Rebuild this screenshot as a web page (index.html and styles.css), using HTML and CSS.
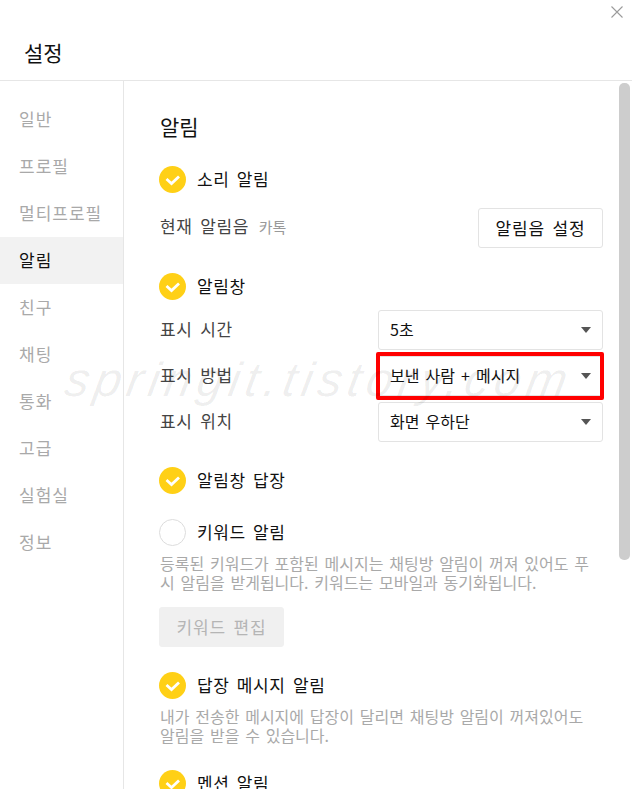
FILE: index.html
```html
<!DOCTYPE html>
<html lang="ko">
<head>
    <meta charset="UTF-8">
    <meta name="viewport" content="width=device-width, initial-scale=1.0">
    <title>설정</title>
    <link rel="stylesheet" href="styles.css">
</head>
<body>
    <div class="settings-window">
        <header class="settings-header">
            <h1 class="settings-title">설정</h1>
            <svg class="close-icon" viewBox="0 0 12 12">
                <path d="M0.5 0.5L11.5 11.5M11.5 0.5L0.5 11.5"/>
            </svg>
        </header>

        <div class="settings-body">
            <nav class="side-menu">
                <a class="side-item">일반</a>
                <a class="side-item">프로필</a>
                <a class="side-item">멀티프로필</a>
                <a class="side-item side-item-active">알림</a>
                <a class="side-item">친구</a>
                <a class="side-item">채팅</a>
                <a class="side-item">통화</a>
                <a class="side-item">고급</a>
                <a class="side-item">실험실</a>
                <a class="side-item">정보</a>
            </nav>

            <main class="settings-content">
                <h2 class="section-title">알림</h2>

                <div class="check-row">
                    <svg class="check-on" viewBox="0 0 27 27"><circle cx="13.5" cy="13.5" r="13.5"/><path d="M7.5 13L12.5 17.5L20 10.5"/></svg>
                    <span>소리 알림</span>
                </div>

                <div class="sound-row">
                    <div class="row-label">현재 알림음 <span class="sound-name">카톡</span></div>
                    <button class="plain-button">알림음 설정</button>
                </div>

                <div class="check-row">
                    <svg class="check-on" viewBox="0 0 27 27"><circle cx="13.5" cy="13.5" r="13.5"/><path d="M7.5 13L12.5 17.5L20 10.5"/></svg>
                    <span>알림창</span>
                </div>

                <div class="select-list">
                    <div class="select-row">
                        <div class="row-label">표시 시간</div>
                        <div class="select-box"><span>5초</span><i class="select-caret"></i></div>
                    </div>
                    <div class="select-row">
                        <div class="row-label">표시 방법</div>
                        <div class="select-box select-marked"><span>보낸 사람 + 메시지</span><i class="select-caret"></i></div>
                    </div>
                    <div class="select-row">
                        <div class="row-label">표시 위치</div>
                        <div class="select-box"><span>화면 우하단</span><i class="select-caret"></i></div>
                    </div>
                </div>

                <div class="check-row">
                    <svg class="check-on" viewBox="0 0 27 27"><circle cx="13.5" cy="13.5" r="13.5"/><path d="M7.5 13L12.5 17.5L20 10.5"/></svg>
                    <span>알림창 답장</span>
                </div>

                <div class="check-row">
                    <svg class="check-off" viewBox="0 0 27 27"><circle cx="13.5" cy="13.5" r="13"/></svg>
                    <span>키워드 알림</span>
                </div>
                <p class="row-desc">등록된 키워드가 포함된 메시지는 채팅방 알림이 꺼져 있어도 푸시 알림을 받게됩니다. 키워드는 모바일과 동기화됩니다.</p>
                <button class="plain-button button-disabled">키워드 편집</button>

                <div class="check-row">
                    <svg class="check-on" viewBox="0 0 27 27"><circle cx="13.5" cy="13.5" r="13.5"/><path d="M7.5 13L12.5 17.5L20 10.5"/></svg>
                    <span>답장 메시지 알림</span>
                </div>
                <p class="row-desc">내가 전송한 메시지에 답장이 달리면 채팅방 알림이 꺼져있어도 알림을 받을 수 있습니다.</p>

                <div class="check-row">
                    <svg class="check-on" viewBox="0 0 27 27"><circle cx="13.5" cy="13.5" r="13.5"/><path d="M7.5 13L12.5 17.5L20 10.5"/></svg>
                    <span>멘션 알림</span>
                </div>
            </main>
        </div>

        <div class="scroll-thumb"></div>
        <div class="watermark">springit.tistory.com</div>
    </div>
</body>
</html>
```

FILE: styles.css
```css
* {
    margin: 0;
    padding: 0;
    box-sizing: border-box;
}

body {
    font-family: "Noto Sans CJK KR", "Noto Sans", sans-serif;
    background: white;
    color: #111;
    overflow: hidden;
}

.settings-window {
    position: relative;
    width: 632px;
    height: 789px;
    overflow: hidden;
}

.settings-header {
    height: 81px;
    padding: 39px 0 0 24px;
    border-bottom: 1px solid #e6e6e6;
}

.settings-title {
    font-size: 21px;
    font-weight: 400;
    line-height: 26px;
}

.close-icon {
    position: absolute;
    top: 6px;
    right: 9px;
    width: 12px;
    height: 12px;
    fill: none;
    stroke: #9b9b9b;
    stroke-width: 1.1;
}

.settings-body {
    display: flex;
    height: 708px;
}

.side-menu {
    flex: none;
    width: 124px;
    padding-top: 15px;
    border-right: 1px solid #e6e6e6;
}

.side-item {
    display: block;
    height: 47px;
    padding-left: 19px;
    font-size: 17px;
    letter-spacing: 1px;
    line-height: 46px;
    color: #a9a9a9;
}

.side-item-active {
    background: #f2f2f2;
    color: #111;
}

.settings-content {
    flex: none;
    width: 479px;
    padding-left: 35px;
}

.section-title {
    margin: 33px 0 27px;
    padding-left: 1px;
    font-size: 21px;
    font-weight: 400;
    line-height: 25px;
}

.check-row {
    display: flex;
    align-items: center;
    gap: 11px;
    height: 27px;
    margin-bottom: 25px;
    font-size: 17px;
    letter-spacing: 0.6px;
    word-spacing: 2px;
}

.check-row span {
    margin-bottom: 3px;
}

.check-row svg {
    flex: none;
    width: 27px;
    height: 27px;
}

.check-on circle {
    fill: #ffd016;
}

.check-on path {
    fill: none;
    stroke: white;
    stroke-width: 2.8;
}

.check-off circle {
    fill: white;
    stroke: #dcdcdc;
}

.check-row:has(.check-off),
.check-row:has(+ .row-desc) {
    margin-bottom: 8px;
}

.check-row:has(+ .sound-row) {
    margin-bottom: 15px;
}

.check-row:has(+ .select-list) {
    margin-bottom: 10px;
}

.sound-row,
.select-row {
    display: flex;
    align-items: center;
    justify-content: space-between;
    width: 444px;
}

.sound-row {
    margin-bottom: 25px;
}

.row-label {
    margin: 0 0 3px 1px;
    font-size: 17px;
    letter-spacing: 0.7px;
    word-spacing: 2px;
    color: #444;
}

.sound-row .row-label {
    margin-bottom: 5px;
}

.sound-name {
    margin-left: 2px;
    font-size: 15px;
    letter-spacing: 0;
    color: #999;
}

.plain-button {
    display: block;
    width: 125px;
    height: 40px;
    padding-bottom: 2px;
    background: white;
    border: 1px solid #e3e3e3;
    border-radius: 3px;
    font-family: inherit;
    font-size: 17px;
    letter-spacing: 0.8px;
    word-spacing: 2px;
    color: #111;
}

.button-disabled {
    margin: 0 0 25px;
    background: #f0f0f0;
    border-color: #f0f0f0;
    color: #b5b5b5;
}

.select-list {
    display: flex;
    flex-direction: column;
    gap: 6px;
    margin-bottom: 25px;
}

.select-box {
    position: relative;
    display: flex;
    align-items: center;
    justify-content: space-between;
    width: 225px;
    height: 40px;
    padding: 0 11px 3px;
    border: 1px solid #e3e3e3;
    border-radius: 3px;
    font-size: 16px;
    word-spacing: 1.6px;
}

/* annotation box from the screenshot */
.select-marked::after {
    content: "";
    position: absolute;
    inset: -5px -1.5px -5px -3px;
    border: 4px solid #ff0000;
    border-radius: 2px;
}

.select-caret {
    width: 0;
    height: 0;
    margin-top: 3px;
    border-left: 5.5px solid transparent;
    border-right: 5.5px solid transparent;
    border-top: 6px solid #555;
}

.row-desc {
    width: 444px;
    margin-bottom: 15px;
    padding-left: 1px;
    font-size: 16px;
    line-height: 19px;
    color: #a9a9a9;
    word-spacing: 1.3px;
}

.row-desc:has(+ .check-row) {
    margin-bottom: 25px;
}

.scroll-thumb {
    position: absolute;
    top: 83px;
    right: 2px;
    width: 11px;
    height: 477px;
    background: #cdcdcd;
    border-radius: 5px;
}

.watermark {
    position: absolute;
    top: 352px;
    left: 66px;
    font-family: "Liberation Sans", sans-serif;
    font-style: italic;
    font-size: 48px;
    letter-spacing: 5.5px;
    color: rgba(0, 0, 0, 0.07);
    transform: skewX(-10deg);
    pointer-events: none;
}
```
